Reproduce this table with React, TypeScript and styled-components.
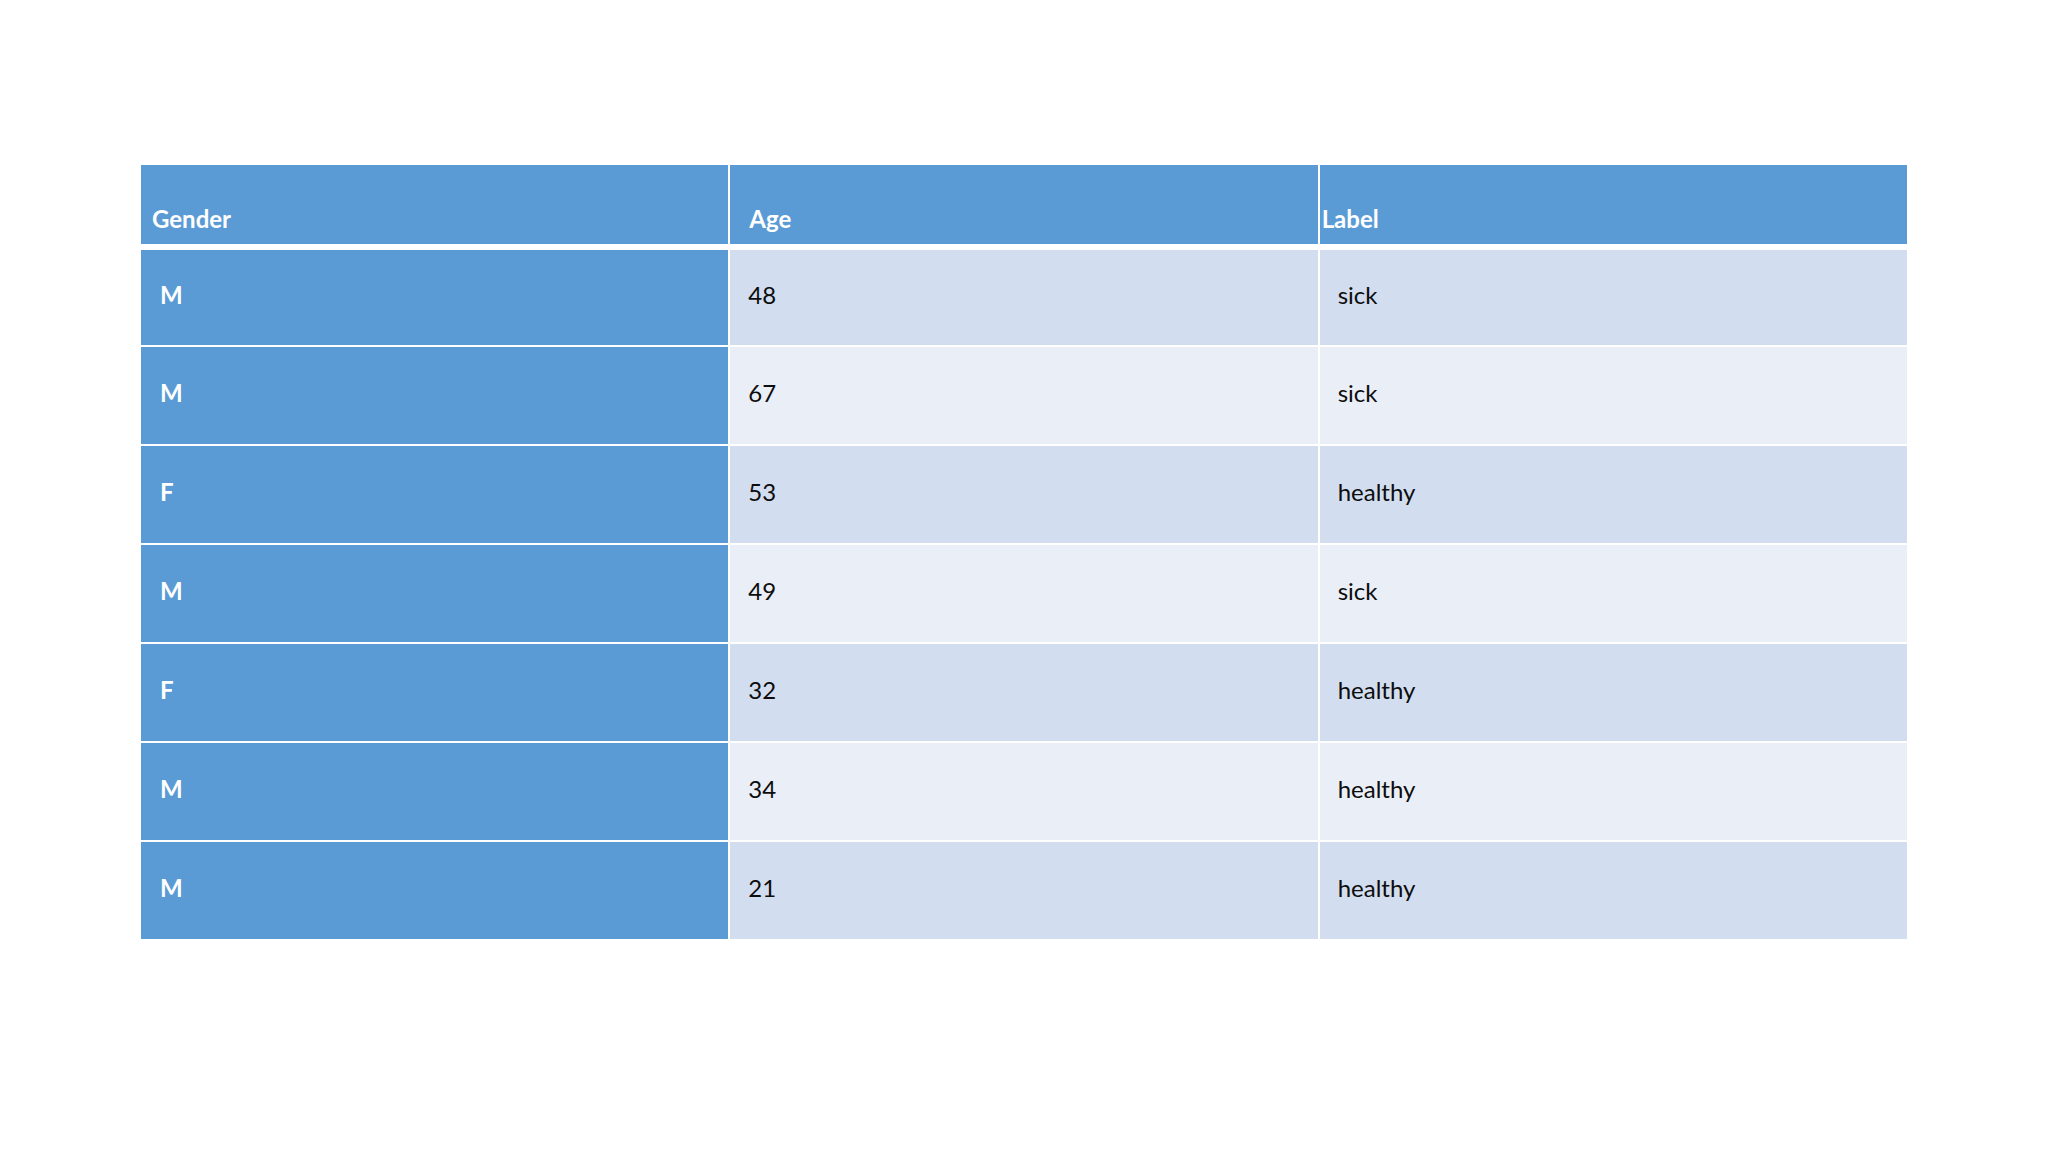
import styled, { createGlobalStyle } from "styled-components"

const GlobalStyle = createGlobalStyle`
  html, body {
    margin: 0;
    padding: 0;
    background: #ffffff;
  }
  body {
    font-family: Lato, "Liberation Sans", sans-serif;
  }
`

const Page = styled.div`
  width: 2048px;
  height: 1152px;
  padding: 165px 0 0 141px;
  box-sizing: border-box;
  background: #ffffff;
`

const Table = styled.div`
  width: 1766px;
  display: flex;
  flex-direction: column;
`

const HeaderRow = styled.div`
  display: grid;
  grid-template-columns: repeat(3, 1fr);
  column-gap: 2px;
  height: 79px;
  margin-bottom: 6px;
`

const HeaderCell = styled.div<{ $indent: number }>`
  display: flex;
  align-items: flex-end;
  padding: 0 0 11px ${(p) => p.$indent}px;
  background: #5b9bd5;
  color: #ffffff;
  font-size: 24px;
  font-weight: 700;
`

const Body = styled.div`
  display: flex;
  flex-direction: column;
  gap: 2px;
`

const Row = styled.div<{ $first: boolean }>`
  display: grid;
  grid-template-columns: repeat(3, 1fr);
  column-gap: 2px;
  height: ${(p) => (p.$first ? 95 : 97)}px;
`

const Cell = styled.div<{ $band: boolean }>`
  display: flex;
  align-items: center;
  padding: 0 0 6px 18px;
  background: ${(p) => (p.$band ? "#d2deef" : "#eaeff7")};
  color: #0d0d0d;
  font-size: 24px;
`

const KeyCell = styled(Cell)`
  padding-left: 19px;
  background: #5b9bd5;
  color: #ffffff;
  font-weight: 700;
`

const rows = [
  { gender: "M", age: 48, label: "sick" },
  { gender: "M", age: 67, label: "sick" },
  { gender: "F", age: 53, label: "healthy" },
  { gender: "M", age: 49, label: "sick" },
  { gender: "F", age: 32, label: "healthy" },
  { gender: "M", age: 34, label: "healthy" },
  { gender: "M", age: 21, label: "healthy" },
]

export default function App() {
  return (
    <Page>
      <GlobalStyle />
      <Table>
        <HeaderRow>
          <HeaderCell $indent={11}>Gender</HeaderCell>
          <HeaderCell $indent={19}>Age</HeaderCell>
          <HeaderCell $indent={2}>Label</HeaderCell>
        </HeaderRow>
        <Body>
          {rows.map((r, i) => (
            <Row key={i} $first={i === 0}>
              <KeyCell $band={i % 2 === 0}>{r.gender}</KeyCell>
              <Cell $band={i % 2 === 0}>{r.age}</Cell>
              <Cell $band={i % 2 === 0}>{r.label}</Cell>
            </Row>
          ))}
        </Body>
      </Table>
    </Page>
  )
}
